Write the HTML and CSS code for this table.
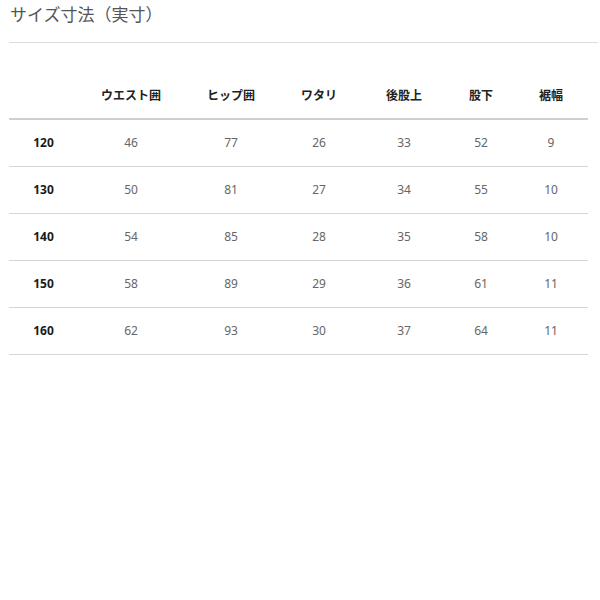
FILE: index.html
```html
<!DOCTYPE html>
<html lang="ja">
<head>
<meta charset="utf-8">
<link rel="stylesheet" href="styles.css">
</head>
<body>
<div class="page">
  <h2 class="title">サイズ寸法（実寸）</h2>
  <table class="size-table">
    <colgroup>
      <col class="c0"><col class="c1"><col class="c2"><col class="c3"><col class="c4"><col class="c5"><col class="c6">
    </colgroup>
    <thead>
      <tr><th></th><th>ウエスト囲</th><th>ヒップ囲</th><th>ワタリ</th><th>後股上</th><th>股下</th><th>裾幅</th></tr>
    </thead>
    <tbody>
      <tr><th>120</th><td>46</td><td>77</td><td>26</td><td>33</td><td>52</td><td>9</td></tr>
      <tr><th>130</th><td>50</td><td>81</td><td>27</td><td>34</td><td>55</td><td>10</td></tr>
      <tr><th>140</th><td>54</td><td>85</td><td>28</td><td>35</td><td>58</td><td>10</td></tr>
      <tr><th>150</th><td>58</td><td>89</td><td>29</td><td>36</td><td>61</td><td>11</td></tr>
      <tr><th>160</th><td>62</td><td>93</td><td>30</td><td>37</td><td>64</td><td>11</td></tr>
    </tbody>
  </table>
</div>
</body>
</html>
```
FILE: styles.css
```css
html, body {
  margin: 0;
  padding: 0;
  background: #fff;
}
body {
  font-family: "Noto Sans CJK JP", "Noto Sans", sans-serif;
  color: #222;
}
.page {
  padding: 0 2px 0 9px;
}
.title {
  margin: 0;
  padding: 2px 0 0 1px;
  height: 43px;
  box-sizing: border-box;
  font-size: 17px;
  line-height: 24px;
  font-weight: 400;
  color: #555;
  border-bottom: 1px solid #dcdcdc;
}
.size-table {
  width: 579px;
  border-collapse: collapse;
  margin-top: 29px;
  table-layout: fixed;
}
.c0 { width: 69px; }
.c1 { width: 106px; }
.c2 { width: 94px; }
.c3 { width: 82px; }
.c4 { width: 88px; }
.c5 { width: 66px; }
.c6 { width: 74px; }
.size-table th,
.size-table td {
  height: 46px;
  padding: 0;
  text-align: center;
  vertical-align: middle;
  font-size: 12px;
  line-height: 16px;
}
.size-table thead th {
  font-weight: 700;
  color: #222;
  border-bottom: 2px solid #cfcfcf;
  height: 46px;
}
.size-table tbody th {
  font-family: "Noto Sans", "Noto Sans CJK JP", sans-serif;
  font-weight: 700;
  color: #1a1a1a;
}
.size-table tbody td {
  font-family: "Noto Sans", "Noto Sans CJK JP", sans-serif;
  color: #666;
}
.size-table tbody tr {
  border-bottom: 1px solid #d6d6d6;
}
```
